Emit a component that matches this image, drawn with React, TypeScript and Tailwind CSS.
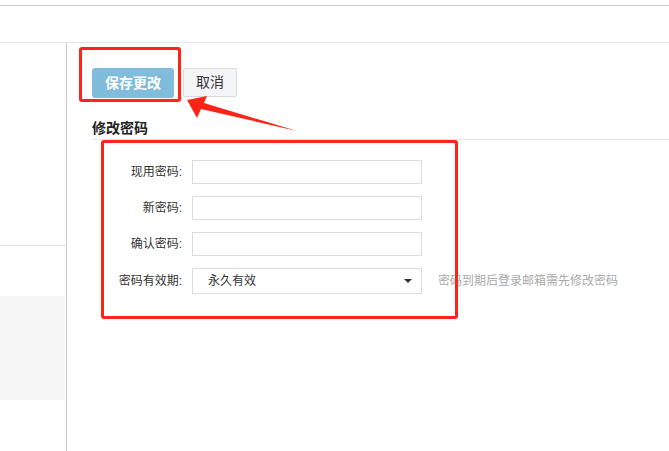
import React from "react";

const fontStack = '"Liberation Sans", "Noto Sans CJK SC", sans-serif';

function Field({ label, children }: { label: string; children: React.ReactNode }) {
  return (
    <div className="flex items-center">
      <div className="w-[90px] text-right text-[12px] leading-[16px] text-[#333]">{label}</div>
      <div className="ml-[10px] flex items-center">{children}</div>
    </div>
  );
}

function TextInput() {
  return <input type="password" className="h-[24px] w-[230px] border border-[#dcdcdc] bg-white outline-none" />;
}

export default function App() {
  return (
    <div className="relative h-[451px] w-[669px] overflow-hidden bg-white" style={{ fontFamily: fontStack }}>
      {/* header bars */}
      <div className="h-[6px] border-b border-[#cccccc]" />
      <div className="h-[37px] border-b border-[#e4e4e4]" />

      <div className="flex h-[408px]">
        {/* side navigation */}
        <div className="flex w-[67px] shrink-0 flex-col border-r border-[#cccccc]">
          <div className="h-[203px] border-b border-[#e2e2e2]" />
          <div className="h-[50px]" />
          <div className="mr-[1px] h-[104px] bg-[#f7f7f7]" />
        </div>

        {/* settings panel */}
        <div className="flex-1 pl-[25px] pt-[25px]">
          <div className="flex items-start gap-[9px]">
            <button className="h-[30px] w-[82px] rounded-[3px] bg-[#80bcdb] text-[14px] font-semibold text-white">
              保存更改
            </button>
            <button className="h-[29px] w-[54px] rounded-[2px] border border-[#dadada] bg-[#f4f5f6] text-[14px] text-[#333]">
              取消
            </button>
          </div>

          <div className="mt-[20px] border-b border-[#e6e6e6] pb-[1px] text-[14px] font-bold leading-[20px] text-[#222]">
            修改密码
          </div>

          <div className="flex flex-col gap-[12px] pt-[20px]">
            <Field label="现用密码:">
              <TextInput />
            </Field>
            <Field label="新密码:">
              <TextInput />
            </Field>
            <Field label="确认密码:">
              <TextInput />
            </Field>
            <Field label="密码有效期:">
              <div className="flex h-[26px] w-[230px] items-center justify-between border border-[#dcdcdc] bg-white pl-[15px] pr-[9px] text-[12px] text-[#333]">
                <span>永久有效</span>
                <span className="h-0 w-0 border-x-[4px] border-t-[4px] border-x-transparent border-t-[#333]" />
              </div>
              <span className="ml-[16px] text-[12px] text-[#aaaaaa]">密码到期后登录邮箱需先修改密码</span>
            </Field>
          </div>
        </div>
      </div>

      {/* annotation marks */}
      <div className="absolute left-[79px] top-[47px] h-[55px] w-[102px] rounded-[3px] border-[3px] border-[#ff2418]" />
      <div className="absolute left-[101px] top-[140px] h-[179px] w-[357px] rounded-[3px] border-[3px] border-[#ff2418]" />
      <svg className="absolute left-0 top-0" width="669" height="451" viewBox="0 0 669 451">
        <polygon points="187,100 207,96 204,103 297,131 201,109 197,118" fill="#ff2418" />
      </svg>
    </div>
  );
}
